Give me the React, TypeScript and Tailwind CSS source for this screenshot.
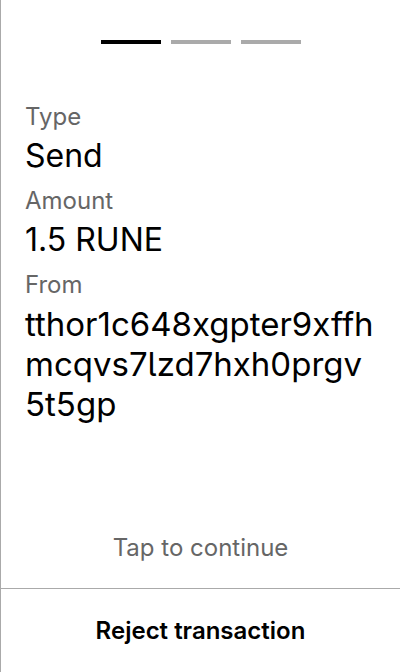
import React from "react";

const fields = [
  { label: "Type", value: "Send", big: false },
  { label: "Amount", value: "1.5 RUNE", big: false },
  { label: "From", value: "tthor1c648xgpter9xffhmcqvs7lzd7hxh0prgv5t5gp", big: true },
];

export default function App() {
  return (
    <div className="w-[400px] h-[672px] bg-white border-l border-[#aaaaaa] flex flex-col [font-family:Inter,'Noto_Sans',sans-serif] [font-feature-settings:'cv05']">
      <div className="pt-10 flex justify-center gap-[10px]">
        <div className="w-[60px] h-1 bg-black" />
        <div className="w-[60px] h-1 bg-[#aaaaaa]" />
        <div className="w-[60px] h-1 bg-[#aaaaaa]" />
      </div>

      <div className="mt-[59px] px-6 flex flex-col gap-[11px]">
        {fields.map((f) => (
          <div key={f.label} className="flex flex-col gap-[5px]">
            <p className="text-[24px] leading-[28px] text-[#666666]">{f.label}</p>
            <p
              className={
                f.big
                  ? "text-[33px] leading-[40px] text-black break-all"
                  : "text-[32px] leading-[40px] text-black break-all"
              }
            >
              {f.value}
            </p>
          </div>
        ))}
      </div>

      <div className="flex-1" />

      <button className="pb-6 text-[24px] leading-8 text-[#666666] text-center">
        Tap to continue
      </button>

      <button className="h-[84px] border-t border-[#aaaaaa] flex items-center justify-center text-[24px] leading-8 font-semibold text-black">
        Reject transaction
      </button>
    </div>
  );
}
